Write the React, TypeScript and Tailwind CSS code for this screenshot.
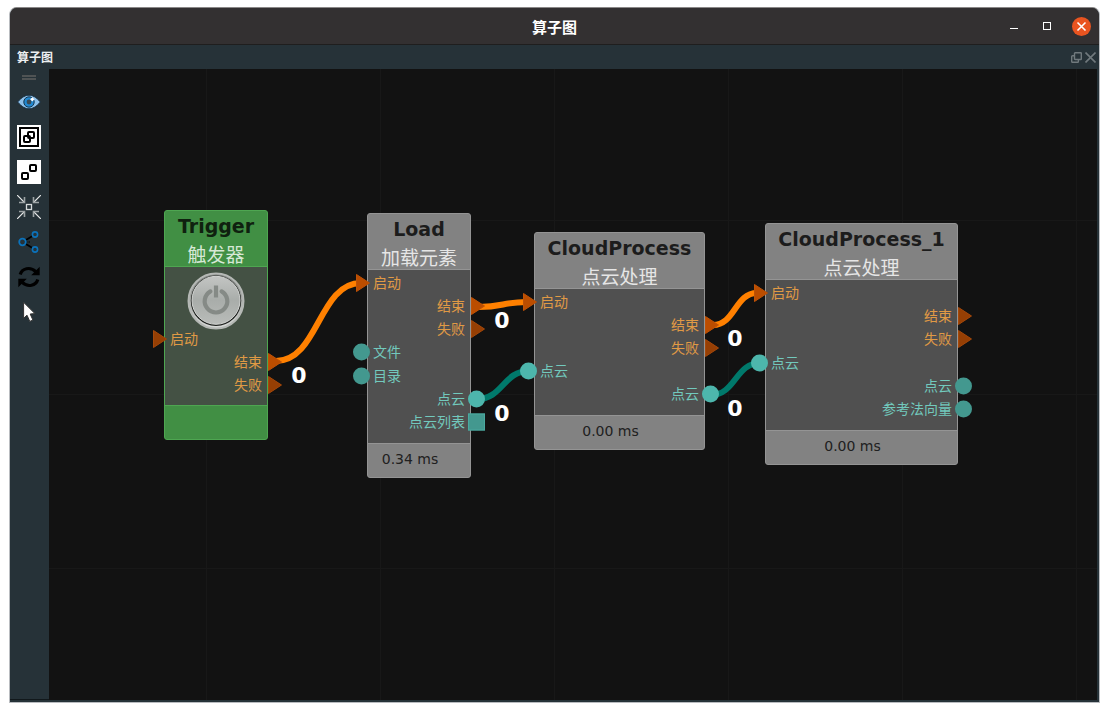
import type { ReactNode } from "react";
import clsx from "clsx";

type PortShape = "flow" | "data" | "list";

interface Port {
  label: string;
  side: "in" | "out";
  shape: PortShape;
  linked?: boolean;
}

interface GraphNode {
  name: string;
  caption: string;
  place: string;
  bodyHeight: string;
  time?: string;
  trigger?: boolean;
  ports: Port[];
}

const nodes: GraphNode[] = [
  {
    name: "Trigger",
    caption: "触发器",
    place: "left-[115px] top-[141px] w-[104px]",
    bodyHeight: "h-[139px]",
    trigger: true,
    ports: [
      { label: "启动", side: "in", shape: "flow" },
      { label: "结束", side: "out", shape: "flow", linked: true },
      { label: "失败", side: "out", shape: "flow" },
    ],
  },
  {
    name: "Load",
    caption: "加载元素",
    place: "left-[318px] top-[144px] w-[104px]",
    bodyHeight: "h-[174px]",
    time: "0.34 ms",
    ports: [
      { label: "启动", side: "in", shape: "flow", linked: true },
      { label: "结束", side: "out", shape: "flow", linked: true },
      { label: "失败", side: "out", shape: "flow" },
      { label: "文件", side: "in", shape: "data" },
      { label: "目录", side: "in", shape: "data" },
      { label: "点云", side: "out", shape: "data", linked: true },
      { label: "点云列表", side: "out", shape: "list" },
    ],
  },
  {
    name: "CloudProcess",
    caption: "点云处理",
    place: "left-[485px] top-[163px] w-[171px]",
    bodyHeight: "h-[127px]",
    time: "0.00 ms",
    ports: [
      { label: "启动", side: "in", shape: "flow", linked: true },
      { label: "结束", side: "out", shape: "flow", linked: true },
      { label: "失败", side: "out", shape: "flow" },
      { label: "点云", side: "in", shape: "data", linked: true },
      { label: "点云", side: "out", shape: "data", linked: true },
    ],
  },
  {
    name: "CloudProcess_1",
    caption: "点云处理",
    place: "left-[716px] top-[154px] w-[193px]",
    bodyHeight: "h-[151px]",
    time: "0.00 ms",
    ports: [
      { label: "启动", side: "in", shape: "flow", linked: true },
      { label: "结束", side: "out", shape: "flow" },
      { label: "失败", side: "out", shape: "flow" },
      { label: "点云", side: "in", shape: "data", linked: true },
      { label: "点云", side: "out", shape: "data" },
      { label: "参考法向量", side: "out", shape: "data" },
    ],
  },
];

// end points are in canvas coordinates
const cables = [
  { from: [227, 292], to: [312, 214], color: "#ff8000" },
  { from: [430, 238], to: [478, 233], color: "#ff8000" },
  { from: [664, 256], to: [708, 224], color: "#ff8000" },
  { from: [428, 330], to: [480, 302], color: "#00796b" },
  { from: [662, 326], to: [711, 294], color: "#00796b" },
];

const counters = [
  "left-[250px] top-[307px]",
  "left-[453px] top-[252px]",
  "left-[453px] top-[345px]",
  "left-[686px] top-[270px]",
  "left-[686px] top-[340px]",
];

function PortMark({ side, shape, linked }: Port) {
  if (shape === "flow") {
    return (
      <svg
        viewBox="0 0 14 18"
        className={clsx("absolute top-1/2 h-[18px] w-[14px] -translate-y-1/2", side === "in" ? "-left-[12px]" : "-right-[15px]")}
      >
        <path d="M0.5 0.5 L13.5 9 L0.5 17.5 Z" fill={linked ? "#bb4d00" : "#963f04"} stroke={linked ? "#bf5206" : "#a5480a"} />
      </svg>
    );
  }
  return (
    <span
      className={clsx(
        "absolute top-1/2 size-[17px] -translate-y-1/2",
        side === "in" ? "-left-[15px]" : "-right-[15px]",
        shape === "data" && "rounded-full",
        linked ? "bg-[#4db6ac]" : "bg-[#43988f]",
        shape === "list" && "border border-[#4aa99f]",
      )}
    />
  );
}

function PowerButton() {
  return (
    <button type="button" aria-label="触发" className="mx-auto mt-1 -mb-[3px] block size-[58px] shrink-0">
      <svg viewBox="0 0 58 58" className="size-full">
        <defs>
          <linearGradient id="rim" x1="0" y1="0" x2="0" y2="1">
            <stop offset="0" stopColor="#777b78" />
            <stop offset="0.5" stopColor="#a9aca9" />
            <stop offset="1" stopColor="#d9dbd9" />
          </linearGradient>
          <linearGradient id="face" x1="0" y1="0" x2="0" y2="1">
            <stop offset="0" stopColor="#c3c5c3" />
            <stop offset="0.5" stopColor="#a9adaa" />
            <stop offset="1" stopColor="#b9bcb9" />
          </linearGradient>
        </defs>
        <circle cx="29" cy="29" r="27.5" fill="url(#rim)" stroke="#b5b8b5" strokeWidth="2" />
        <circle cx="29" cy="28.8" r="25.2" fill="#1c1f1c" />
        <circle cx="29" cy="28.3" r="24" fill="url(#face)" stroke="#d3d5d3" />
        <path d="M23.4 19.4 A11.3 11.3 0 1 0 34.6 19.4" fill="none" stroke="#858a86" strokeWidth="4.2" strokeLinecap="round" />
        <path d="M29 13.5 V25.5" stroke="#858a86" strokeWidth="4.2" />
      </svg>
    </button>
  );
}

function NodeCard({ node }: { node: GraphNode }) {
  const line = node.trigger ? "border-[#4ea651]" : "border-[#949494]";
  return (
    <section
      className={clsx(
        "absolute rounded-[3px] border",
        node.place,
        line,
        node.trigger ? "bg-[#418f44]" : "bg-[#828282]",
      )}
    >
      <header className={clsx("h-[56px] border-b text-center text-[19px] whitespace-nowrap", line)}>
        <h2 className={clsx("leading-[30px] font-bold", node.trigger ? "text-[#0f210f]" : "text-[#1c1c1c]")}>{node.name}</h2>
        <p className={clsx("leading-7", node.trigger ? "text-[#d6e8d6]" : "text-[#e6e6e6]")}>{node.caption}</p>
      </header>
      <div className={clsx("flex flex-col border-b pt-px pb-[9px]", node.bodyHeight, line, node.trigger ? "bg-[#445144]" : "bg-[#505050]")}>
        {node.trigger && <PowerButton />}
        {node.ports.map((port, i) => (
          <div
            key={i}
            className={clsx(
              "relative flex flex-1 items-center text-[14px] leading-5 whitespace-nowrap",
              port.side === "in" ? "pl-[5px]" : "justify-end pr-[5px]",
              port.shape === "flow" ? "text-[#e09a45]" : "text-[#72c9bd]",
            )}
          >
            {port.label}
            <PortMark {...port} />
          </div>
        ))}
      </div>
      <footer className="h-[33px] pr-[18px] text-center text-[14px] leading-[31px] text-[#202020]">{node.time}</footer>
    </section>
  );
}

function Tool({ label, children }: { label: string; children: ReactNode }) {
  return (
    <button type="button" title={label} aria-label={label} className="size-6">
      <svg viewBox="0 0 24 24" fill="none" className="size-6">{children}</svg>
    </button>
  );
}

function Toolbar() {
  return (
    <aside className="flex w-[39px] shrink-0 flex-col items-center gap-[11px] border-b border-[#11181b] bg-[#263238] pt-[6px] pr-px">
      <div className="-mb-px h-[5px] w-[14px] border-y-2 border-[#4f5354]" />
      <Tool label="显示">
        <path d="M0.6 12 C5 6.6 9 5.2 12 5.2 S19 6.6 23.4 12 C19 17.4 15 18.8 12 18.8 S5 17.4 0.6 12 Z" fill="#8dc0ea" stroke="#172c3c" />
        <circle cx="12" cy="12" r="5.2" fill="#2188d1" stroke="#14364f" />
        <circle cx="12" cy="12" r="2.4" fill="#3b4a54" />
        <path d="M15.3 7.2 L17.4 9.3 L15.3 11.4 L13.2 9.3 Z" fill="#fff" />
      </Tool>
      <Tool label="合并">
        <rect width="24" height="24" fill="#fff" />
        <rect x="3" y="3" width="18" height="18" stroke="#000" strokeWidth="2" />
        <rect x="7" y="11" width="6" height="6" rx="1" stroke="#000" strokeWidth="2" />
        <rect x="11" y="7" width="6" height="6" rx="1" stroke="#000" strokeWidth="2" />
      </Tool>
      <Tool label="拆分">
        <rect width="24" height="24" fill="#fff" />
        <rect x="5" y="13" width="6" height="6" rx="1" stroke="#000" strokeWidth="2" />
        <rect x="13" y="5" width="6" height="6" rx="1" stroke="#000" strokeWidth="2" />
      </Tool>
      <Tool label="居中">
        <path d="M0 0 L7.5 7.5 M24 0 L16.5 7.5 M0 24 L7.5 16.5 M24 24 L16.5 16.5" stroke="#e4e6e6" strokeWidth="1.2" />
        <path d="M2 7.5 H7.5 V2 M22 7.5 H16.5 V2 M2 16.5 H7.5 V22 M22 16.5 H16.5 V22" stroke="#9da3a5" strokeWidth="1.6" />
        <rect x="9.5" y="9.5" width="5" height="5" stroke="#d5d9da" strokeWidth="1.3" />
      </Tool>
      <Tool label="分支">
        <path d="M8 10.5 L15.5 6 M8 13.5 L15.5 18" stroke="#000" strokeWidth="1.8" />
        <path d="M9 12 H14" stroke="#000" strokeDasharray="1.5 1" />
        <circle cx="5.5" cy="12" r="3.3" stroke="#0b72bb" strokeWidth="1.8" />
        <circle cx="18" cy="4.5" r="2.6" stroke="#0b72bb" strokeWidth="1.6" />
        <circle cx="18" cy="19.5" r="2.6" stroke="#0b72bb" strokeWidth="1.6" />
      </Tool>
      <Tool label="刷新">
        <path d="M3.2 9.5 C5 3.5 13 1 19 6.8" stroke="#000" strokeWidth="3.2" />
        <path d="M22.7 1.8 V10.2 H14.2 Z" fill="#000" />
        <path d="M20.8 14.5 C19 20.5 11 23 5 17.2" stroke="#000" strokeWidth="3.2" />
        <path d="M1.3 22.2 V13.8 H9.8 Z" fill="#000" />
      </Tool>
      <Tool label="选择">
        <path d="M6.6 2.3 V18.3 L10 15.2 L12.8 21.4 L15.9 20 L13.2 14 L17.9 13.6 Z" fill="#fff" stroke="#333" strokeLinejoin="round" />
      </Tool>
    </aside>
  );
}

function Canvas() {
  return (
    <main className="relative min-w-0 flex-1 overflow-hidden bg-[#121212] bg-[linear-gradient(to_right,#181818_1px,transparent_1px),linear-gradient(to_bottom,#181818_1px,transparent_1px)] bg-[size:174px_174px] bg-position-[157px_151px]">
      <svg className="absolute inset-0 size-full" fill="none">
        {cables.map(({ from: [x1, y1], to: [x2, y2], color }) => {
          const mid = (x1 + x2) / 2;
          return (
            <path key={`${x1}-${y1}`} d={`M${x1} ${y1} C${mid} ${y1} ${mid} ${y2} ${x2} ${y2}`} stroke={color} strokeWidth="6" />
          );
        })}
      </svg>
      {nodes.map(node => (
        <NodeCard key={node.name} node={node} />
      ))}
      {counters.map(place => (
        <span key={place} className={clsx("absolute -translate-x-1/2 -translate-y-1/2 text-[22px] leading-6 font-bold text-white", place)}>0</span>
      ))}
    </main>
  );
}

export default function App() {
  return (
    <div className="flex h-screen flex-col bg-white px-[9px] pt-[7px] pb-[9px] font-['DejaVu_Sans','Noto_Sans_CJK_SC',sans-serif]">
      <div className="flex min-h-0 flex-1 flex-col overflow-hidden rounded-t-lg border border-[#b9bcc0] border-t-[#8a8888] bg-[#263238]">
        <div className="grid h-[37px] shrink-0 grid-cols-[1fr_auto_1fr] items-center border-b border-[#1f1e1e] bg-[#333031]">
          <span />
          <h1 className="pt-1 text-[15px] leading-5 font-bold text-white">算子图</h1>
          <div className="flex items-center justify-end gap-[25px] pr-2">
            <button type="button" aria-label="最小化" className="h-[6px] w-2 border-b border-white" />
            <button type="button" aria-label="最大化" className="size-2 border border-white" />
            <button type="button" aria-label="关闭" className="-ml-1 size-[19px] rounded-full bg-[#e95420]">
              <svg viewBox="0 0 19 19" className="size-full" stroke="#fff" strokeWidth="1.6">
                <path d="M5.5 5.5 L13.5 13.5 M13.5 5.5 L5.5 13.5" />
              </svg>
            </button>
          </div>
        </div>
        <div className="flex h-6 shrink-0 items-center justify-between pr-[3px] pl-[7px]">
          <h2 className="pt-0.5 text-[12px] leading-4 font-bold text-[#eceff1]">算子图</h2>
          <div className="flex gap-[3px]">
            <button type="button" aria-label="浮动" className="size-[11px]">
              <svg viewBox="0 0 11 11" className="size-full" fill="none" stroke="#70797d" strokeWidth="1.4">
                <rect x="3.5" y="0.7" width="6.8" height="6.8" rx="0.6" />
                <path d="M3.5 3.7 H1.5 Q0.7 3.7 0.7 4.5 V9.5 Q0.7 10.3 1.5 10.3 H6.6 Q7.4 10.3 7.4 9.5 V7.5" />
              </svg>
            </button>
            <button type="button" aria-label="关闭面板" className="size-[11px]">
              <svg viewBox="0 0 11 11" className="size-full" stroke="#70797d" strokeWidth="1.6">
                <path d="M0.5 0.5 L10.5 10.5 M10.5 0.5 L0.5 10.5" />
              </svg>
            </button>
          </div>
        </div>
        <div className="flex min-h-0 flex-1 pr-[2px] pb-[2px]">
          <Toolbar />
          <Canvas />
        </div>
      </div>
    </div>
  );
}
